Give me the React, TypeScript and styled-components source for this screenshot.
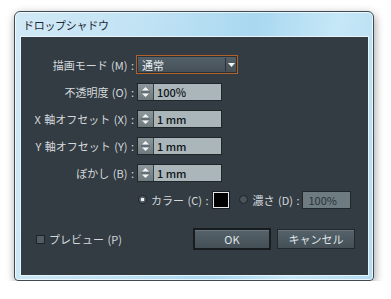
import React from 'react';
import styled, { createGlobalStyle } from 'styled-components';

const GlobalStyle = createGlobalStyle`
  html, body {
    margin: 0;
    padding: 0;
    background: #ffffff;
  }
  body {
    font-family: "Noto Sans CJK JP", "Noto Sans", sans-serif;
  }
`;

const Window = styled.div`
  box-sizing: border-box;
  width: 360px;
  height: 270px;
  margin: 11px 0 0 14px;
  padding: 0 5px 5px 6px;
  display: flex;
  flex-direction: column;
  border: 1px solid #3e4a54;
  border-radius: 6px 6px 4px 4px;
  background: linear-gradient(100deg, #d2e9f6 0%, #bfe2f4 35%, #a9d8f0 60%, #c6e7f7 80%, #b3dcf1 100%);
  box-shadow: 1px 3px 10px rgba(0, 0, 0, 0.38), inset 0 0 0 1px rgba(255, 255, 255, 0.7);
`;

const TitleBar = styled.div`
  height: 25px;
  display: flex;
  align-items: center;
  padding-left: 2px;
  font-size: 11px;
  color: #1e2a33;
  letter-spacing: -0.3px;
`;

const Panel = styled.div`
  flex: 1;
  display: flex;
  flex-direction: column;
  background: #333c42;
  box-shadow: 0 0 0 1px #e6f4fb;
  padding-top: 14px;
`;

const FormGrid = styled.div`
  display: grid;
  grid-template-columns: 113px auto;
  grid-auto-rows: 27px;
  column-gap: 3px;
  align-items: center;
`;

const Label = styled.div`
  justify-self: end;
  font-size: 11px;
  color: #d3d9dd;
  white-space: nowrap;
  word-spacing: 1px;
`;

const Select = styled.div`
  box-sizing: border-box;
  width: 102px;
  height: 19px;
  margin-left: -1px;
  display: flex;
  align-items: center;
  border: 1px solid #b0612c;
  background: linear-gradient(#55616a, #444f56);
  box-shadow: inset 0 0 0 1px #2a3136;
`;

const SelectText = styled.div`
  flex: 1;
  padding-left: 5px;
  font-size: 11px;
  color: #e8eef2;
`;

const SelectArrow = styled.div`
  width: 11px;
  height: 13px;
  display: flex;
  align-items: center;
  justify-content: center;
  border-left: 1px solid #2a3237;
`;

const Spinner = styled.div<{ $width: number; $offset?: number }>`
  box-sizing: border-box;
  width: ${p => p.$width}px;
  height: 18px;
  margin-left: ${p => p.$offset ?? 0}px;
  display: flex;
  border: 1px solid #20272b;
`;

const SpinButtons = styled.div`
  width: 15px;
  display: flex;
  align-items: center;
  justify-content: center;
  background: linear-gradient(#8d989d, #6f7a7f);
  border-right: 1px solid #3a4348;
`;

const Field = styled.div<{ $muted?: boolean }>`
  flex: 1;
  display: flex;
  align-items: center;
  padding-left: ${p => (p.$muted ? 5 : 3)}px;
  background: ${p => (p.$muted ? '#6e7b81' : '#aab6ba')};
  font-size: 11px;
  font-weight: ${p => (p.$muted ? 400 : 500)};
  color: ${p => (p.$muted ? '#2a3338' : '#111518')};
`;

const OptionRow = styled.div`
  grid-column: 2;
  display: flex;
  align-items: center;
`;

const Radio = styled.span<{ $checked?: boolean }>`
  box-sizing: border-box;
  width: 9px;
  height: 9px;
  margin: 0 4px 0 1px;
  border-radius: 50%;
  border: 1px solid #1e2428;
  background: ${p =>
    p.$checked
      ? 'radial-gradient(circle, #eef2f4 0 1.5px, #59646a 2px)'
      : '#4a555b'};
`;

const OptionLabel = styled.span`
  font-size: 11px;
  color: #d3d9dd;
  white-space: nowrap;
  word-spacing: 1px;
`;

const Swatch = styled.span`
  box-sizing: border-box;
  width: 16px;
  height: 16px;
  margin: 0 9px 0 5px;
  border: 1px solid #e4e8ea;
  background: #000;
  box-shadow: 0 0 0 1px #1a1f22;
`;

const Footer = styled.div`
  display: flex;
  align-items: center;
  height: 26px;
  margin-top: 13px;
  padding: 0 13px 0 15px;
`;

const CheckBox = styled.span`
  box-sizing: border-box;
  width: 9px;
  height: 9px;
  margin-right: 4px;
  border: 1px solid #1e2428;
  background: #525d63;
`;

const Spacer = styled.div`
  flex: 1;
`;

const Button = styled.div<{ $primary?: boolean }>`
  box-sizing: border-box;
  width: 78px;
  height: ${p => (p.$primary ? 22 : 20)}px;
  display: flex;
  align-items: center;
  justify-content: center;
  margin-left: ${p => (p.$primary ? 0 : 6)}px;
  border: ${p => (p.$primary ? '2px solid #171c1f' : '1px solid #22292d')};
  background: linear-gradient(#56626a, #444f56);
  box-shadow: inset 0 1px 0 rgba(255, 255, 255, 0.12);
  font-size: 11px;
  color: #dfe5e8;
`;

const SpinIcon = () => (
  <svg width="9" height="14" viewBox="0 0 9 14">
    <path d="M4.5 2 L8 5.5 H1 Z" fill="#f2f5f6" />
    <line x1="0" y1="7" x2="9" y2="7" stroke="#4b555a" strokeWidth="1" />
    <path d="M4.5 12 L8 8.5 H1 Z" fill="#f2f5f6" />
  </svg>
);

const rows = [
  { label: '不透明度 (O) :', value: '100%' },
  { label: 'X 軸オフセット (X) :', value: '1 mm' },
  { label: 'Y 軸オフセット (Y) :', value: '1 mm' },
  { label: 'ぼかし (B) :', value: '1 mm' },
];

export default function App() {
  return (
    <>
      <GlobalStyle />
      <Window>
        <TitleBar>ドロップシャドウ</TitleBar>
        <Panel>
          <FormGrid>
            <Label>描画モード (M) :</Label>
            <Select>
              <SelectText>通常</SelectText>
              <SelectArrow>
                <svg width="7" height="4" viewBox="0 0 7 4">
                  <path d="M0 0 H7 L3.5 4 Z" fill="#f4f6f7" />
                </svg>
              </SelectArrow>
            </Select>
            {rows.map(r => (
              <React.Fragment key={r.label}>
                <Label>{r.label}</Label>
                <Spinner $width={85}>
                  <SpinButtons>
                    <SpinIcon />
                  </SpinButtons>
                  <Field>{r.value}</Field>
                </Spinner>
              </React.Fragment>
            ))}
            <OptionRow>
              <Radio $checked />
              <OptionLabel>カラー (C) :</OptionLabel>
              <Swatch />
              <Radio />
              <OptionLabel>濃さ (D) :</OptionLabel>
              <Spinner $width={49} $offset={3}>
                <Field $muted>100%</Field>
              </Spinner>
            </OptionRow>
          </FormGrid>
          <Footer>
            <CheckBox />
            <OptionLabel>プレビュー (P)</OptionLabel>
            <Spacer />
            <Button $primary>OK</Button>
            <Button>キャンセル</Button>
          </Footer>
        </Panel>
      </Window>
    </>
  );
}
